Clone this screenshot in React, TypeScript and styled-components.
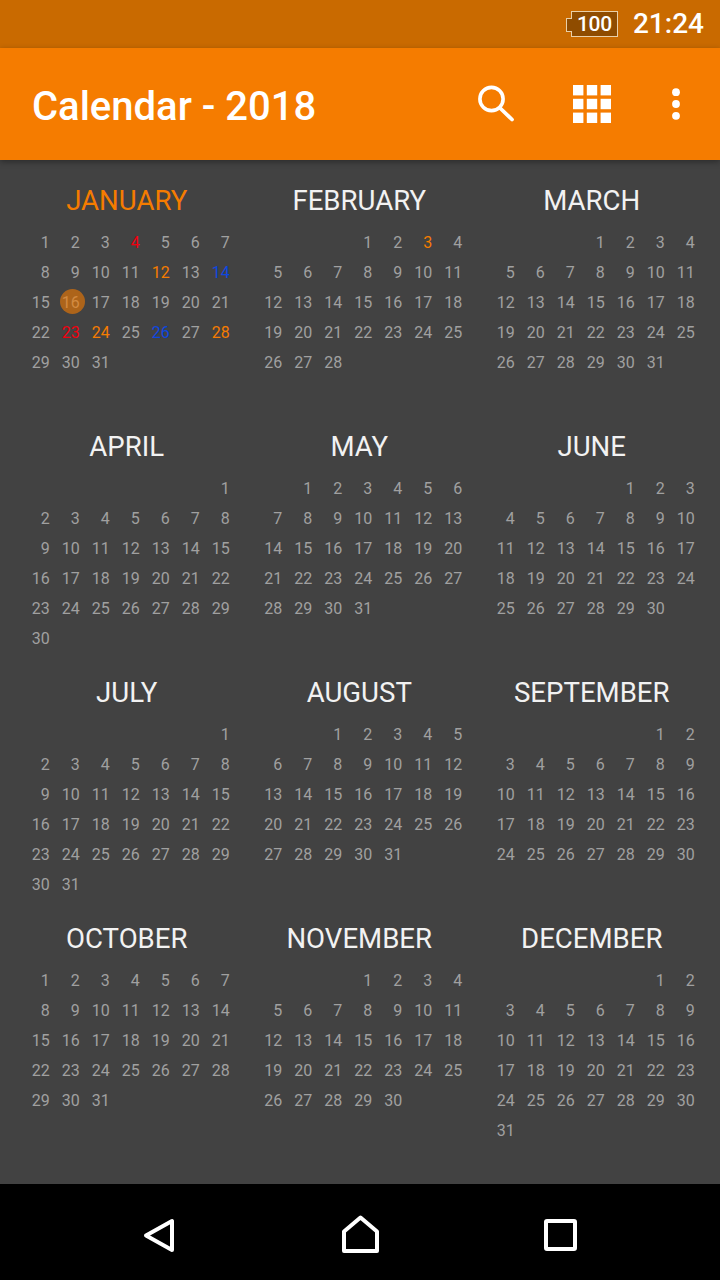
import styled, { createGlobalStyle } from 'styled-components';

const GlobalStyle = createGlobalStyle`
  html, body {
    margin: 0;
    padding: 0;
    background: #424242;
  }
  body {
    font-family: Roboto, "Noto Sans", sans-serif;
  }
`;

type Tone = 'orange' | 'red' | 'blue';

interface MonthData {
  name: string;
  offset: number;
  days: number;
  tones?: Record<number, Tone>;
  today?: number;
  current?: boolean;
}

const months: MonthData[] = [
  {
    name: 'JANUARY',
    offset: 0,
    days: 31,
    current: true,
    today: 16,
    tones: { 4: 'red', 12: 'orange', 14: 'blue', 23: 'red', 24: 'orange', 26: 'blue', 28: 'orange' }
  },
  { name: 'FEBRUARY', offset: 3, days: 28, tones: { 3: 'orange' } },
  { name: 'MARCH', offset: 3, days: 31 },
  { name: 'APRIL', offset: 6, days: 30 },
  { name: 'MAY', offset: 1, days: 31 },
  { name: 'JUNE', offset: 4, days: 30 },
  { name: 'JULY', offset: 6, days: 31 },
  { name: 'AUGUST', offset: 2, days: 31 },
  { name: 'SEPTEMBER', offset: 5, days: 30 },
  { name: 'OCTOBER', offset: 0, days: 31 },
  { name: 'NOVEMBER', offset: 3, days: 30 },
  { name: 'DECEMBER', offset: 5, days: 31 }
];

const toneColors: Record<Tone, string> = {
  orange: '#f57c00',
  red: '#f0000f',
  blue: '#0d47e0'
};

const Screen = styled.div`
  width: 720px;
  height: 1280px;
  display: flex;
  flex-direction: column;
  overflow: hidden;
`;

const StatusBar = styled.div`
  height: 48px;
  background: #c96a00;
  display: flex;
  align-items: center;
  justify-content: flex-end;
  padding-right: 16px;
  flex: none;
`;

const Battery = styled.div`
  position: relative;
  box-sizing: border-box;
  width: 47px;
  height: 26px;
  margin-right: 15px;
  margin-top: -1px;
  background: #8f4c00;
  border: 1px solid #e9cfa8;
  color: #fff;
  font-size: 21px;
  font-weight: 500;
  letter-spacing: -0.3px;
  line-height: 24px;
  text-align: center;

  &::before {
    content: '';
    position: absolute;
    left: -6px;
    top: 6px;
    width: 5px;
    height: 12px;
    background: #8f4c00;
    border: 1px solid #e9cfa8;
    border-right: none;
  }
`;

const Clock = styled.div`
  color: #fff;
  font-size: 28px;
  font-weight: 500;
  line-height: 52px;
`;

const AppBar = styled.header`
  position: relative;
  z-index: 1;
  height: 112px;
  flex: none;
  background: #f57c00;
  box-shadow: 0 2px 6px rgba(0, 0, 0, 0.35);
  display: flex;
  align-items: center;
  padding-left: 32px;
`;

const Title = styled.h1`
  margin: 0;
  flex: 1;
  color: #fff;
  font-size: 40px;
  font-weight: 500;
  line-height: 118px;
  height: 112px;
`;

const Actions = styled.div`
  display: flex;
  align-items: center;
  gap: 36px;
  padding-right: 20px;
`;

const ActionIcon = styled.svg`
  display: block;
  width: 48px;
  height: 48px;
`;

const SearchSvg = styled(ActionIcon)`
  margin-right: 13px;
`;

const Main = styled.main`
  flex: 1;
  background: #424242;
  display: grid;
  grid-template-columns: repeat(3, 232.5px);
  grid-auto-rows: 246px;
  padding-left: 10px;
  align-content: start;
`;

const Month = styled.section`
  padding-top: 23px;
  display: flex;
  flex-direction: column;
  align-items: center;
`;

const MonthName = styled.div<{ $current?: boolean }>`
  color: ${(p) => (p.$current ? '#f57c00' : '#f2f2f2')};
  font-size: 27.6px;
  line-height: 36px;
  margin-bottom: 9px;
  padding-left: 1px;
`;

const DayGrid = styled.div`
  display: grid;
  grid-template-columns: repeat(7, 30px);
  grid-auto-rows: 30px;
  margin-right: 3px;
`;

const Day = styled.div<{ $tone?: Tone; $today?: boolean }>`
  position: relative;
  color: ${(p) => (p.$tone ? toneColors[p.$tone] : '#a0a0a0')};
  font-size: 16px;
  line-height: 30px;
  text-align: right;

  ${(p) =>
    p.$today &&
    `
    &::after {
      content: '';
      position: absolute;
      right: -5px;
      top: 1px;
      width: 25px;
      height: 25px;
      border-radius: 50%;
      background: rgba(245, 124, 0, 0.6);
    }
  `}
`;

const NavBar = styled.nav`
  height: 96px;
  flex: none;
  background: #000;
  display: flex;
  align-items: center;
  justify-content: center;
  gap: 152px;
`;

const NavIcon = styled.svg`
  display: block;
  width: 48px;
  height: 48px;
  fill: none;
  stroke: #fff;
  stroke-width: 4;
  stroke-linejoin: round;
`;

const SearchIcon = () => (
  <SearchSvg viewBox="0 0 48 48">
    <circle cx="20.5" cy="19" r="11.6" fill="none" stroke="#fff" strokeWidth="3.6" />
    <path d="M29 28 L41 39.5" stroke="#fff" strokeWidth="3.8" strokeLinecap="round" />
  </SearchSvg>
);

const GridIcon = () => (
  <ActionIcon viewBox="0 0 48 48">
    {[0, 1, 2].flatMap((row) =>
      [0, 1, 2].map((col) => (
        <rect key={`${row}-${col}`} x={5 + col * 13.8} y={5 + row * 13.8} width="10.4" height="10.4" fill="#fff" />
      ))
    )}
  </ActionIcon>
);

const MoreIcon = () => (
  <ActionIcon viewBox="0 0 48 48">
    <circle cx="24" cy="12.2" r="3.9" fill="#fff" />
    <circle cx="24" cy="24" r="3.9" fill="#fff" />
    <circle cx="24" cy="35.8" r="3.9" fill="#fff" />
  </ActionIcon>
);

const MonthBlock = ({ month }: { month: MonthData }) => (
  <Month>
    <MonthName $current={month.current}>{month.name}</MonthName>
    <DayGrid>
      {Array.from({ length: month.offset }, (_, i) => (
        <div key={`blank-${i}`} />
      ))}
      {Array.from({ length: month.days }, (_, i) => {
        const day = i + 1;
        return (
          <Day key={day} $tone={month.tones?.[day]} $today={month.today === day}>
            {day}
          </Day>
        );
      })}
    </DayGrid>
  </Month>
);

export default function App() {
  return (
    <>
      <GlobalStyle />
      <Screen>
        <StatusBar>
          <Battery>100</Battery>
          <Clock>21:24</Clock>
        </StatusBar>
        <AppBar>
          <Title>Calendar - 2018</Title>
          <Actions>
            <SearchIcon />
            <GridIcon />
            <MoreIcon />
          </Actions>
        </AppBar>
        <Main>
          {months.map((m) => (
            <MonthBlock key={m.name} month={m} />
          ))}
        </Main>
        <NavBar>
          <NavIcon viewBox="0 0 48 48">
            <path d="M10 27.5 L36 13 L36 42 Z" />
          </NavIcon>
          <NavIcon viewBox="0 0 48 48">
            <path d="M8 23.5 L24.5 9.5 L41 23.5 L41 43 L8 43 Z" />
          </NavIcon>
          <NavIcon viewBox="0 0 48 48">
            <rect x="10" y="13" width="29" height="28" rx="1" />
          </NavIcon>
        </NavBar>
      </Screen>
    </>
  );
}
